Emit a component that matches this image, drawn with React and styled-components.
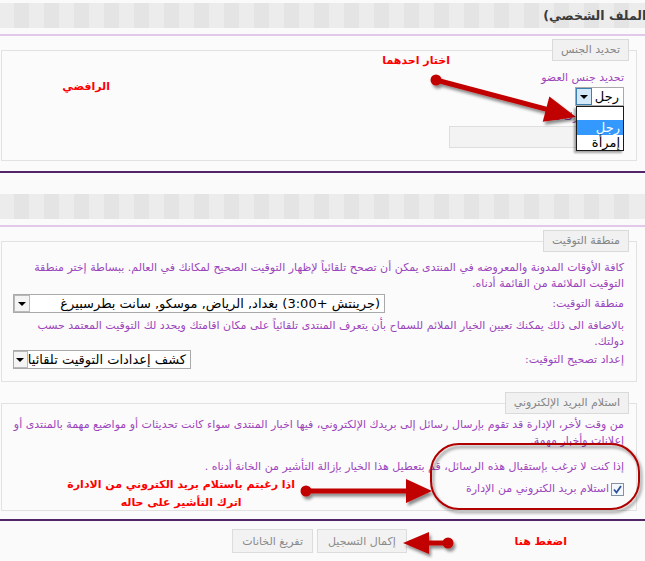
import React from "react";
import styled, { createGlobalStyle } from "styled-components";

const GlobalStyle = createGlobalStyle`
  html, body {
    margin: 0;
    padding: 0;
    background: #fafafa;
  }
  body {
    font-family: Tahoma, "DejaVu Sans", sans-serif;
    font-size: 11px;
    color: #333;
  }
`;

const Page = styled.div`
  position: relative;
  width: 645px;
  height: 561px;
  overflow: hidden;
  direction: rtl;
  padding-top: 3px;
  box-sizing: border-box;
`;

const Panel = styled.section`
  margin-top: ${(p) => p.$gap || 0}px;
`;

const StripeBar = styled.div`
  height: 25px;
  display: flex;
  align-items: center;
  overflow: hidden;
  background: repeating-linear-gradient(
    90deg,
    #ececec 0 15px,
    #e4e4e4 15px 30px
  );
  background-position: -1px 0;
`;

const Title = styled.h2`
  margin: 0 -7px 0 0;
  font-size: 12.5px;
  font-weight: bold;
  color: #3a3a3a;
  white-space: nowrap;
`;

const SoftLine = styled.div`
  height: 2px;
  margin-top: 6px;
  background: #e2c9e9;
`;

const DarkLine = styled.div`
  height: 2px;
  background: #512567;
`;

const Body = styled.div`
  background: #fbfbfb;
  padding: 3px 8px ${(p) => p.$bottom || 10}px 1px;
  display: flex;
  flex-direction: column;
  gap: 10px;
`;

const Box = styled.fieldset`
  margin: 0;
  min-width: 0;
  border: 1px solid #e2e2e2;
  padding: 0 7px ${(p) => p.$bottom || 12}px 11px;
`;

const Legend = styled.legend`
  height: 20px;
  line-height: 20px;
  padding: 0 8px;
  border: 1px solid #dadada;
  background: #f1f1f1;
  color: #858585;
  font-size: 11px;
`;

const Content = styled.div`
  padding: ${(p) => p.$top || 0}px 5px 0 0;
  display: flex;
  flex-direction: column;
  align-items: flex-start;
`;

const FieldLabel = styled.div`
  color: #9b45bc;
  line-height: 14px;
  margin-top: ${(p) => p.$gap || 0}px;
`;

const Para = styled.p`
  margin: ${(p) => p.$gap || 0}px 0 0;
  color: #9b45bc;
  line-height: 16px;
  align-self: stretch;
`;

const Row = styled.div`
  align-self: stretch;
  display: flex;
  align-items: center;
  justify-content: space-between;
  margin-top: ${(p) => p.$gap || 0}px;
`;

const RowLabel = styled.span`
  color: #9b45bc;
  line-height: 14px;
`;

const SelectWrap = styled.div`
  position: relative;
  margin-top: ${(p) => p.$gap || 0}px;
`;

const Select = styled.div`
  width: ${(p) => p.$width}px;
  height: ${(p) => p.$height || 19}px;
  box-sizing: border-box;
  display: flex;
  align-items: center;
  justify-content: space-between;
  border: 1px solid #a9a9a9;
  background: #fff;
  color: #000;
  font-size: 13px;
  overflow: hidden;
`;

const SelectText = styled.span`
  padding-right: 4px;
  white-space: nowrap;
`;

const SelectArrow = styled.span`
  flex: none;
  width: 16px;
  height: 100%;
  box-sizing: border-box;
  display: flex;
  align-items: center;
  justify-content: center;
  border: 1px solid ${(p) => (p.$open ? "#3c7fb1" : "#b9b9b9")};
  background: ${(p) => (p.$open ? "#d3e8f8" : "#f4f4f4")};

  &::after {
    content: "";
    border-top: 4px solid #000;
    border-left: 4px solid transparent;
    border-right: 4px solid transparent;
    margin-top: 1px;
  }
`;

const Dropdown = styled.ul`
  position: absolute;
  top: 100%;
  right: 0;
  z-index: 2;
  width: 48px;
  margin: 0;
  padding: 13px 0 0;
  list-style: none;
  box-sizing: border-box;
  background: #fff;
  border: 1px solid #1a1a1a;
  box-shadow: -2px 2px 2px rgba(0, 0, 0, 0.35);
`;

const Option = styled.li`
  height: 15px;
  line-height: 15px;
  padding-right: 3px;
  font-size: 13px;
  color: ${(p) => (p.$selected ? "#fff" : "#000")};
  background: ${(p) => (p.$selected ? "#3399ff" : "transparent")};
`;

const TextInput = styled.div`
  width: 175px;
  height: 22px;
  margin-top: 2px;
  box-sizing: border-box;
  border: 1px solid #dedede;
  background: #f3f3f3;
`;

const CheckRow = styled.label`
  display: flex;
  align-items: center;
  gap: 2px;
  margin-top: ${(p) => p.$gap || 0}px;
  color: #9b45bc;
  line-height: 16px;
`;

const CheckBox = styled.span`
  width: 13px;
  height: 13px;
  box-sizing: border-box;
  border: 1px solid #8393a6;
  background: #f4f8fc;
  display: flex;
  align-items: center;
  justify-content: center;
`;

const Actions = styled.div`
  display: flex;
  justify-content: center;
  gap: 4px;
  padding: 8px 6px 0 0;
`;

const Button = styled.button`
  height: 24px;
  padding: 0 ${(p) => p.$pad || 10}px;
  border: 1px solid #dcdcdc;
  background: #f2f2f2;
  color: #8a8a8a;
  font-family: inherit;
  font-size: 11px;
`;

const Overlay = styled.svg`
  position: absolute;
  top: 0;
  left: 0;
  pointer-events: none;
`;

const Note = styled.div`
  position: absolute;
  right: ${(p) => p.$right}px;
  top: ${(p) => p.$top}px;
  color: #ff0000;
  font-weight: bold;
  font-size: 11px;
  line-height: 18px;
  text-align: center;
  white-space: nowrap;
`;

function Arrow({ from, to, head = 30, half = 12 }) {
  const [x1, y1] = from;
  const [x2, y2] = to;
  const len = Math.hypot(x2 - x1, y2 - y1);
  const ux = (x2 - x1) / len;
  const uy = (y2 - y1) / len;
  const bx = x2 - ux * head;
  const by = y2 - uy * head;
  const px = -uy * half;
  const py = ux * half;
  const tipPoints = `${x2},${y2} ${bx + px},${by + py} ${bx - px},${by - py}`;

  return (
    <g filter="url(#shade)">
      <line x1={x1} y1={y1} x2={bx + ux * 2} y2={by + uy * 2} stroke="#c10000" strokeWidth="5" />
      <circle cx={x1} cy={y1} r="5.5" fill="#c10000" />
      <polygon points={tipPoints} fill="#c10000" />
    </g>
  );
}

const Tick = () => (
  <svg width="9" height="9" viewBox="0 0 9 9">
    <path d="M1 4.5 L3.5 7.5 L8 1" fill="none" stroke="#2a4f9c" strokeWidth="1.8" />
  </svg>
);

const App = () => {
  return (
    <Page>
      <GlobalStyle />

      <Panel>
        <StripeBar>
          <Title>(الملف الشخصي)</Title>
        </StripeBar>
        <SoftLine />
        <Body>
          <Box>
            <Legend>تحديد الجنس</Legend>
            <Content $top={10}>
              <FieldLabel>تحديد جنس العضو</FieldLabel>
              <SelectWrap $gap={2}>
                <Select $width={49}>
                  <SelectText>رجل</SelectText>
                  <SelectArrow $open />
                </Select>
                <Dropdown>
                  <Option $selected>رجل</Option>
                  <Option>إمرأة</Option>
                </Dropdown>
              </SelectWrap>
              <FieldLabel $gap={4}>اكتب اختيارك هنا:</FieldLabel>
              <TextInput />
            </Content>
          </Box>
        </Body>
        <DarkLine />
      </Panel>

      <Panel $gap={21}>
        <StripeBar />
        <SoftLine />
        <Body $bottom={8}>
          <Box>
            <Legend>منطقة التوقيت</Legend>
            <Content $top={8}>
              <Para>
                كافة الأوقات المدونة والمعروضه في المنتدى يمكن أن تصحح تلقائياً لإظهار التوقيت الصحيح لمكانك في العالم. ببساطة إختر منطقة التوقيت الملائمة من القائمة أدناه.
              </Para>
              <Row $gap={2}>
                <RowLabel>منطقة التوقيت:</RowLabel>
                <Select $width={372}>
                  <SelectText>(جرينتش +3:00) بغداد, الرياض, موسكو, سانت بطرسبيرغ</SelectText>
                  <SelectArrow />
                </Select>
              </Row>
              <Para $gap={5}>
                بالاضافة الى ذلك يمكنك تعيين الخيار الملائم للسماح بأن يتعرف المنتدى تلقائياً على مكان اقامتك ويحدد لك التوقيت المعتمد حسب دولتك.
              </Para>
              <Row>
                <RowLabel>إعداد تصحيح التوقيت:</RowLabel>
                <Select $width={178}>
                  <SelectText>كشف إعدادات التوقيت تلقائيا</SelectText>
                  <SelectArrow />
                </Select>
              </Row>
            </Content>
          </Box>

          <Box $bottom={13}>
            <Legend>استلام البريد الإلكتروني</Legend>
            <Content $top={3}>
              <Para>
                من وقت لأخر، الإدارة قد تقوم بإرسال رسائل إلى بريدك الإلكتروني، فيها اخبار المنتدى سواء كانت تحديثات أو مواضيع مهمة بالمنتدى أو إعلانات وأخبار مهمة.
              </Para>
              <Para $gap={10}>
                إذا كنت لا ترغب بإستقبال هذه الرسائل، قم بتعطيل هذا الخيار بإزالة التأشير من الخانة أدناه .
              </Para>
              <CheckRow $gap={6}>
                <CheckBox>
                  <Tick />
                </CheckBox>
                استلام بريد الكتروني من الإدارة
              </CheckRow>
            </Content>
          </Box>
        </Body>
        <DarkLine />
        <Actions>
          <Button $pad={10}>إكمال التسجيل</Button>
          <Button $pad={9}>تفريغ الخانات</Button>
        </Actions>
      </Panel>

      <Overlay width="645" height="561" viewBox="0 0 645 561">
        <defs>
          <filter id="shade" x="-20%" y="-40%" width="140%" height="180%">
            <feDropShadow dx="2" dy="3" stdDeviation="1.6" floodColor="#000" floodOpacity="0.45" />
          </filter>
        </defs>
        <Arrow from={[436, 80]} to={[576, 117]} head={31} half={13} />
        <Arrow from={[306, 491]} to={[432, 491]} head={26} half={12} />
        <Arrow from={[448, 543]} to={[403, 543]} head={26} half={11} />
        <rect
          x="431"
          y="444"
          width="208"
          height="65"
          rx="28"
          fill="none"
          stroke="#b00000"
          strokeWidth="2"
          filter="url(#shade)"
        />
      </Overlay>

      <Note $right={535} $top={78}>الرافضي</Note>
      <Note $right={195} $top={52}>اختار احدهما</Note>
      <Note $right={350} $top={476}>
        اذا رغبتم باستلام بريد الكتروني من الادارة
        <br />
        اترك التأشير على حاله
      </Note>
      <Note $right={78} $top={533}>اضغط هنا</Note>
    </Page>
  );
};

export default App;
